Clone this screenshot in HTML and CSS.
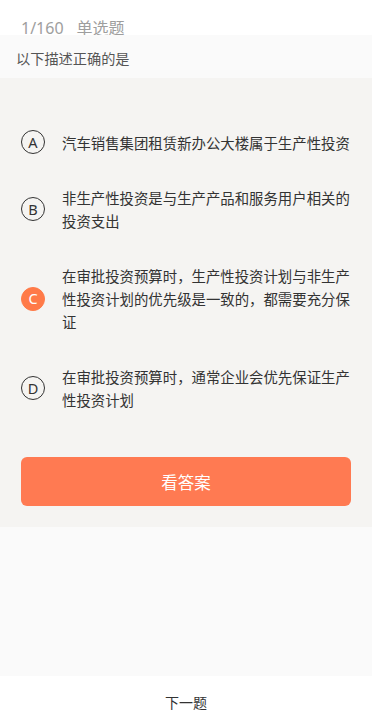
FILE: index.html
```html
<!DOCTYPE html>
<html lang="zh">
<head>
<meta charset="utf-8">
<title>单选题</title>
<link rel="stylesheet" href="styles.css">
</head>
<body>
<div class="page">
  <div class="top"><span class="num">1/160</span><span class="type">单选题</span></div>
  <div class="question">以下描述正确的是</div>
  <div class="main">
    <div class="options">
      <div class="option"><span class="letter">A</span><span class="text">汽车销售集团租赁新办公大楼属于生产性投资</span></div>
      <div class="option"><span class="letter">B</span><span class="text">非生产性投资是与生产产品和服务用户相关的投资支出</span></div>
      <div class="option"><span class="letter selected">C</span><span class="text">在审批投资预算时，生产性投资计划与非生产性投资计划的优先级是一致的，都需要充分保证</span></div>
      <div class="option"><span class="letter">D</span><span class="text">在审批投资预算时，通常企业会优先保证生产性投资计划</span></div>
    </div>
    <div class="btn">看答案</div>
  </div>
  <div class="blank"></div>
  <div class="footer">下一题</div>
</div>
</body>
</html>
```
FILE: styles.css
```css
* { box-sizing: border-box; }
html, body { margin: 0; padding: 0; }
body {
  width: 372px;
  height: 728px;
  overflow: hidden;
  font-family: "Noto Sans CJK SC", "Noto Sans", sans-serif;
  background: #ffffff;
}
.page {
  display: flex;
  flex-direction: column;
  height: 728px;
}
.top {
  height: 35px;
  padding: 19px 0 0 21px;
  font-size: 16px;
  line-height: 16px;
  color: #9e9e9e;
  background: #ffffff;
  white-space: nowrap;
}
.top .num {
  font-family: "Noto Sans", sans-serif;
  margin-right: 13px;
}
.question {
  height: 43px;
  padding: 13px 0 0 16px;
  font-size: 14.2px;
  line-height: 20px;
  color: #555555;
  background: #fafafa;
}
.main {
  background: #f5f4f2;
  padding: 52px 21px 21px 21px;
  height: 449px;
}
.options {
  display: flex;
  flex-direction: column;
  gap: 32px;
}
.option {
  display: flex;
  align-items: center;
  gap: 17px;
}
.letter {
  flex: 0 0 24px;
  width: 24px;
  height: 24px;
  border: 1px solid #333333;
  border-radius: 50%;
  display: flex;
  align-items: center;
  justify-content: center;
  font-family: "Noto Sans", sans-serif;
  font-size: 14.5px;
  color: #333333;
  line-height: 1;
}
.letter.selected {
  background: #ff7a48;
  border-color: #ff7a48;
  color: #ffffff;
}
.text {
  width: 290px;
  font-size: 14.4px;
  line-height: 23px;
  color: #333333;
}
.btn {
  margin-top: 46px;
  height: 49px;
  border-radius: 6px;
  background: #ff7a52;
  color: #ffffff;
  font-size: 16.5px;
  display: flex;
  align-items: center;
  justify-content: center;
}
.blank {
  height: 149px;
  background: #fafafa;
}
.footer {
  flex: 1;
  display: flex;
  align-items: center;
  justify-content: center;
  font-size: 14px;
  color: #333333;
  background: #ffffff;
}
```
